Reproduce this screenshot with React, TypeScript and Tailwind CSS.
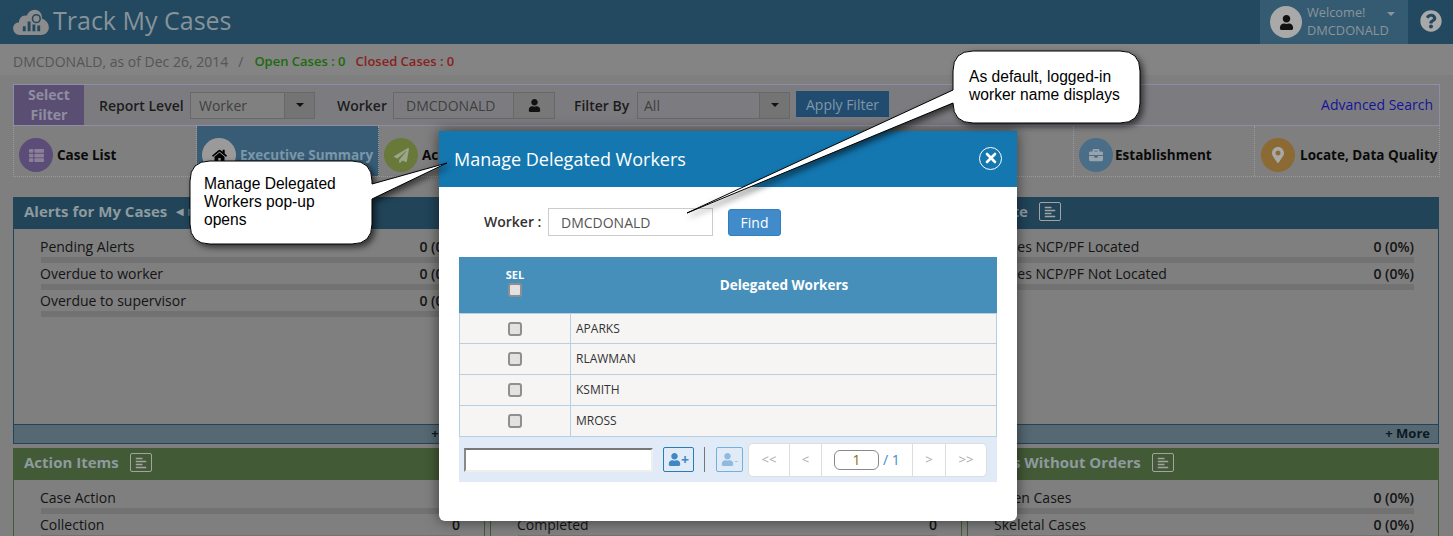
import { FaBriefcase, FaHome, FaMapMarkerAlt, FaPaperPlane, FaQuestionCircle, FaThList, FaUser, FaAlignLeft } from "react-icons/fa";

const sans = "font-['Open_Sans',sans-serif]";

function ChartBox() {
  return (
    <span className="ml-[11px] flex h-[19px] w-[22px] items-center justify-center rounded-[2px] border border-[#a3a3a3] text-[#a3a3a3]">
      <FaAlignLeft className="h-[12px] w-[12px]" />
    </span>
  );
}

interface PanelProps {
  title?: React.ReactNode;
  rows: { label: string; value: string }[];
  green?: boolean;
  more?: boolean;
  bodyHeight?: string;
}

function Panel({ title, rows, green, more, bodyHeight }: PanelProps) {
  return (
    <div className="w-[472px]">
      <div className={`flex h-[32px] items-center pb-[3px] pl-[11px] text-[15px] font-bold text-[#8f9a9f] ${green ? "bg-[#435a36]" : "bg-[#214459]"}`}>
        {title}
      </div>
      <div className={`border-x ${green ? "border-[#435a36]" : "border-[#214459]"} ${bodyHeight ?? ""} pl-[27px] pr-[24px] pt-[7px]`}>
        {rows.map((r, i) => (
          <div key={i}>
            <div className="flex h-[21px] items-center justify-between text-[14px] leading-[21px] text-[#141414]">
              <span className="ml-[-1px]">{r.label}</span>
              <span className="font-semibold">{r.value}</span>
            </div>
            <div className="h-[6px] bg-[#727272]" />
          </div>
        ))}
      </div>
      {more && (
        <div className="flex h-[20px] items-center justify-end border border-[#214459] bg-[#566872] pr-[8px] text-[13px] font-bold text-[#0b1a24]">
          + More
        </div>
      )}
    </div>
  );
}

function Tab({ icon, color, label, width, active, gap = "gap-[4px]" }: { icon: React.ReactNode; color: string; label: string; width: string; active?: boolean; gap?: string }) {
  return (
    <div className={`flex h-full shrink-0 items-center border-r border-dotted border-[#9a9a9a] pl-[5px] pt-[8px] text-[13.5px] font-bold ${gap} ${width} ${active ? "bg-[#385c75] text-[#7b98ab]" : "text-[#0a0a0a]"}`}>
      <span className={`flex h-[34px] w-[34px] shrink-0 items-center justify-center rounded-full ${color}`}>{icon}</span>
      <span className="whitespace-nowrap">{label}</span>
    </div>
  );
}

const workers = ["APARKS", "RLAWMAN", "KSMITH", "MROSS"];

function Check() {
  return <input type="checkbox" readOnly className="h-[14px] w-[14px] appearance-none rounded-[3px] border-2 border-[#8f8f8f] bg-[#e2e2e2]" />;
}

function Modal() {
  return (
    <div className="absolute left-[439px] top-[131px] h-[390px] w-[578px] overflow-hidden rounded-b-[6px] bg-white shadow-[0_0_14px_rgba(0,0,0,0.55)]">
      <div className="flex h-[56px] items-center justify-between bg-[#1477b0] px-[15px] text-[18px] text-white">
        <span>Manage Delegated Workers</span>
        <span className="mb-[2px] flex h-[23px] w-[23px] items-center justify-center rounded-full border border-white">
          <svg viewBox="0 0 12 12" className="h-[12px] w-[12px]">
            <path d="M2 2 L10 10 M10 2 L2 10" stroke="#fff" strokeWidth="2.6" strokeLinecap="round" />
          </svg>
        </span>
      </div>
      <div className="ml-[45px] mt-[21px] flex items-center">
        <span className="mb-[2px] w-[64px] text-[14px] font-semibold text-[#333]">Worker :</span>
        <input readOnly value="DMCDONALD" className="h-[28px] w-[165px] border border-[#ccc] pl-[12px] text-[14px] text-[#555] outline-none" />
        <button className="ml-[15px] h-[27px] w-[53px] rounded-[3px] border border-[#357ebd] bg-[#428bca] text-[14px] text-white">Find</button>
      </div>
      <div className="ml-[20px] mt-[21px] w-[538px] text-[12px] text-[#333]">
        <div className="flex h-[56px] items-center bg-[#468fbb] font-bold text-white">
          <div className="mb-[4px] flex w-[112px] flex-col items-center gap-[2px] text-[11px] leading-[12px]">
            <span>SEL</span>
            <Check />
          </div>
          <div className="flex-1 text-center text-[13.5px]">Delegated Workers</div>
        </div>
        {workers.map((w, i) => (
          <div key={w} className={`flex h-[31px] items-center border-x border-b border-[#b5d0e5] bg-[#f6f5f3] ${i === 0 ? "border-t" : ""}`}>
            <div className="flex h-full w-[111px] items-center justify-center border-r border-[#b5d0e5]">
              <Check />
            </div>
            <div className="pl-[5px]">{w}</div>
          </div>
        ))}
        <div className="flex h-[45px] items-center bg-[#e0ebf7] pl-[5px]">
          <input readOnly className="h-[24px] w-[189px] border-2 border-b-[#eee] border-l-[#888] border-r-[#eee] border-t-[#777] bg-white" />
          <span className="ml-[10px] flex h-[25px] w-[31px] items-center justify-center rounded-[2px] border border-[#2a7cb5] text-[#3f88c5]">
            <FaUser className="h-[13px] w-[13px]" />
            <span className="text-[14px] font-bold leading-none">+</span>
          </span>
          <span className="ml-[10px] h-[25px] w-px bg-[#777]" />
          <span className="ml-[11px] flex h-[25px] w-[27px] items-center justify-center rounded-[2px] border border-[#74b0dc] text-[#8dbbe0]">
            <FaUser className="h-[13px] w-[13px]" />
            <span className="text-[10px] leading-none">-</span>
          </span>
          <div className="ml-[5px] flex h-[34px] w-[239px] items-center rounded-[5px] border border-[#ddd] bg-white text-[13px] text-[#aaa]">
            <span className="flex h-full w-[41px] items-center justify-center border-r border-[#ddd]">&lt;&lt;</span>
            <span className="flex h-full w-[32px] items-center justify-center border-r border-[#ddd]">&lt;</span>
            <span className="flex h-full w-[91px] items-center border-r border-[#ddd] pl-[12px] text-[14px]">
              <span className="flex h-[20px] w-[45px] items-center justify-center rounded-[6px] border border-[#888] text-[#8a6d1f]">1</span>
              <span className="ml-[4px] text-[#428bca]">/ 1</span>
            </span>
            <span className="flex h-full w-[33px] items-center justify-center border-r border-[#ddd]">&gt;</span>
            <span className="flex h-full flex-1 items-center justify-center">&gt;&gt;</span>
          </div>
        </div>
      </div>
    </div>
  );
}

function Callouts() {
  return (
    <>
      <svg viewBox="0 0 1453 536" className="pointer-events-none absolute inset-0 h-[536px] w-[1453px] drop-shadow-[3px_3px_3px_rgba(0,0,0,0.6)]">
        <path d="M210 161 H352 Q372 161 372 181 V184 L447 163 L372 199 V224 Q372 244 352 244 H210 Q190 244 190 224 V181 Q190 161 210 161 Z" fill="#fff" stroke="#000" />
        <path d="M973 51 H1120 Q1140 51 1140 71 V103 Q1140 123 1120 123 H973 Q953 123 953 103 L687 213 L953 90 V71 Q953 51 973 51 Z" fill="#fff" stroke="#000" />
      </svg>
      <div className="absolute left-[204px] top-[175px] font-['Liberation_Sans',sans-serif] text-[15.6px] leading-[18px] text-black">
        Manage Delegated<br />Workers pop-up<br />opens
      </div>
      <div className="absolute left-[969px] top-[68px] font-['Liberation_Sans',sans-serif] text-[15.6px] leading-[18px] text-black">
        As default, logged-in<br />worker name displays
      </div>
    </>
  );
}

export default function App() {
  return (
    <div className={`relative h-[536px] w-[1453px] overflow-hidden bg-[#7f7f7f] ${sans}`}>
      <header className="flex h-[44px] items-center bg-[#224960] pl-[13px]">
        <svg viewBox="0 0 38 28" className="h-[27px] w-[37px]">
          <path d="M7 27 C3 27 0 24 0 20 C0 16 3 14 6 14 C6 9 10 6 14 7 C16 2 20 0 24 1 C28 2 30 5 30 10 C34 11 37 15 37 19 C37 24 33 27 29 27 Z" fill="#8c8c8c" />
          <path d="M10 23 H13 V18 H10 Z M15 23 H18 V13 H15 Z M20 23 H23 V16 H20 Z M25 23 H28 V17 H25 Z" fill="#224960" />
          <circle cx="24" cy="10" r="4" fill="none" stroke="#224960" strokeWidth="1.6" />
        </svg>
        <span className="mb-[3px] ml-[3px] text-[25px] leading-none text-[#879299]">Track My Cases</span>
        <div className="ml-auto flex h-full">
          <div className="flex w-[148px] items-center bg-[#355b73] pl-[10px]">
            <span className="flex h-[32px] w-[32px] items-center justify-center rounded-full bg-[#a9a9a9] text-[#111]">
              <FaUser className="h-[15px] w-[15px]" />
            </span>
            <div className="mb-[2px] ml-[5px] text-[12.8px] leading-[18px] text-[#8b9499]">
              <div className="flex w-[88px] items-center justify-between">
                Welcome!
                <span className="mt-[4px] h-0 w-0 border-x-[4px] border-t-[4px] border-x-transparent border-t-[#8b9499]" />
              </div>
              <div>DMCDONALD</div>
            </div>
          </div>
          <div className="flex w-[45px] items-center justify-center pb-[2px]">
            <FaQuestionCircle className="h-[22px] w-[22px] text-[#a9a9a9]" />
          </div>
        </div>
      </header>

      <div className="flex h-[31px] items-center bg-[#848484] pl-[13px] pt-[4px] text-[14px] text-[#555]">
        <span>DMCDONALD, as of Dec 26, 2014</span>
        <span className="ml-[10px]">/</span>
        <span className="ml-[11px] text-[13px] font-semibold text-[#1c6a0c]">Open Cases : 0</span>
        <span className="ml-[10px] text-[13px] font-semibold text-[#8a2020]">Closed Cases : 0</span>
      </div>

      <div className="ml-[13px] mt-[9px] w-[1427px]">
        <div className="flex h-[42px] items-center border border-[#8d8da8] bg-[#7c7c80] text-[14px]">
          <div className="flex h-full w-[70px] items-center justify-center bg-[#5a4f73] text-center text-[14px] font-bold leading-[20px] text-[#908da0]">
            Select<br />Filter
          </div>
          <span className="ml-[15px] w-[91px] font-semibold text-[#1c1c1c]">Report Level</span>
          <div className="flex h-[27px] w-[125px] border border-[#686868] bg-[#808080] text-[#3f3f3f]">
            <span className="flex-1 pl-[8px] leading-[26px]">Worker</span>
            <span className="flex w-[30px] items-center justify-center border-l border-[#686868] bg-[#747474]">
              <span className="h-0 w-0 border-x-[4px] border-t-[4px] border-x-transparent border-t-[#111]" />
            </span>
          </div>
          <span className="ml-[22px] w-[56px] font-semibold text-[#1c1c1c]">Worker</span>
          <div className="flex h-[27px] w-[162px] border border-[#686868] text-[#3f3f3f]">
            <span className="flex-1 pl-[12px] leading-[26px]">DMCDONALD</span>
            <span className="flex w-[41px] items-center justify-center border-l border-[#686868] bg-[#787878] text-[#111]">
              <FaUser className="h-[13px] w-[13px]" />
            </span>
          </div>
          <span className="ml-[19px] w-[63px] font-semibold text-[#1c1c1c]">Filter By</span>
          <div className="flex h-[27px] w-[153px] border border-[#686868] text-[#3f3f3f]">
            <span className="flex-1 pl-[6px] leading-[26px]">All</span>
            <span className="flex w-[30px] items-center justify-center border-l border-[#686868] bg-[#747474]">
              <span className="h-0 w-0 border-x-[4px] border-t-[4px] border-x-transparent border-t-[#111]" />
            </span>
          </div>
          <span className="mb-[2px] ml-[6px] flex h-[26px] w-[93px] items-center justify-center bg-[#214c70] text-[#7f97a8]">Apply Filter</span>
          <span className="ml-auto mb-[2px] pr-[6px] text-[#14149a]">Advanced Search</span>
        </div>

        <div className="flex h-[51px] border-x border-b border-dotted border-[#9a9a9a]">
          <Tab label="Case List" width="w-[183px]" color="bg-[#5b4c78]" icon={<FaThList className="h-[15px] w-[15px] text-[#8a8098]" />} />
          <Tab active label="Executive Summary" width="w-[182px]" color="bg-[#9a9a9a]" icon={<FaHome className="h-[15px] w-[15px] text-black" />} />
          <Tab label="Ac" width="w-[695px]" color="bg-[#68793a]" icon={<FaPaperPlane className="h-[15px] w-[15px] text-[#9aa58a]" />} />
          <Tab label="Establishment" gap="gap-[2px]" width="w-[181px]" color="bg-[#4a6d88]" icon={<FaBriefcase className="h-[14px] w-[14px] text-[#99a3ab]" />} />
          <div className="flex h-full flex-1 items-center gap-[5px] pl-[6px] pt-[8px] text-[13.5px] font-bold text-[#0a0a0a]">
            <span className="flex h-[34px] w-[34px] shrink-0 items-center justify-center rounded-full bg-[#8c6a33]">
              <FaMapMarkerAlt className="h-[16px] w-[16px] text-[#a8a8a8]" />
            </span>
            <span className="whitespace-nowrap">Locate, Data Quality</span>
          </div>
        </div>

        <div className="mt-[20px] flex gap-[5px]">
          <Panel
            more
            bodyHeight="h-[195px]"
            title={<>Alerts for My Cases<span className="ml-[6px] text-[13px] text-[#8f9a9f]">◄►</span></>}
            rows={[
              { label: "Pending Alerts", value: "0 (0%)" },
              { label: "Overdue to worker", value: "0 (0%)" },
              { label: "Overdue to supervisor", value: "0 (0%)" },
            ]}
          />
          <Panel more bodyHeight="h-[195px]" rows={[]} />
          <Panel
            more
            bodyHeight="h-[195px]"
            title={<>Locate<ChartBox /></>}
            rows={[
              { label: "Cases NCP/PF Located", value: "0 (0%)" },
              { label: "Cases NCP/PF Not Located", value: "0 (0%)" },
            ]}
          />
        </div>

        <div className="mt-[4px] flex gap-[5px]">
          <Panel
            green
            title={<>Action Items<ChartBox /></>}
            rows={[{ label: "Case Action", value: "0" }, { label: "Collection", value: "0" }]}
          />
          <Panel
            green
            rows={[{ label: "", value: "" }, { label: "Completed", value: "0" }]}
          />
          <Panel
            green
            title={<>Cases Without Orders<ChartBox /></>}
            rows={[
              { label: "Open Cases", value: "0 (0%)" },
              { label: "Skeletal Cases", value: "0 (0%)" },
            ]}
          />
        </div>
      </div>

      <Modal />
      <Callouts />
    </div>
  );
}
